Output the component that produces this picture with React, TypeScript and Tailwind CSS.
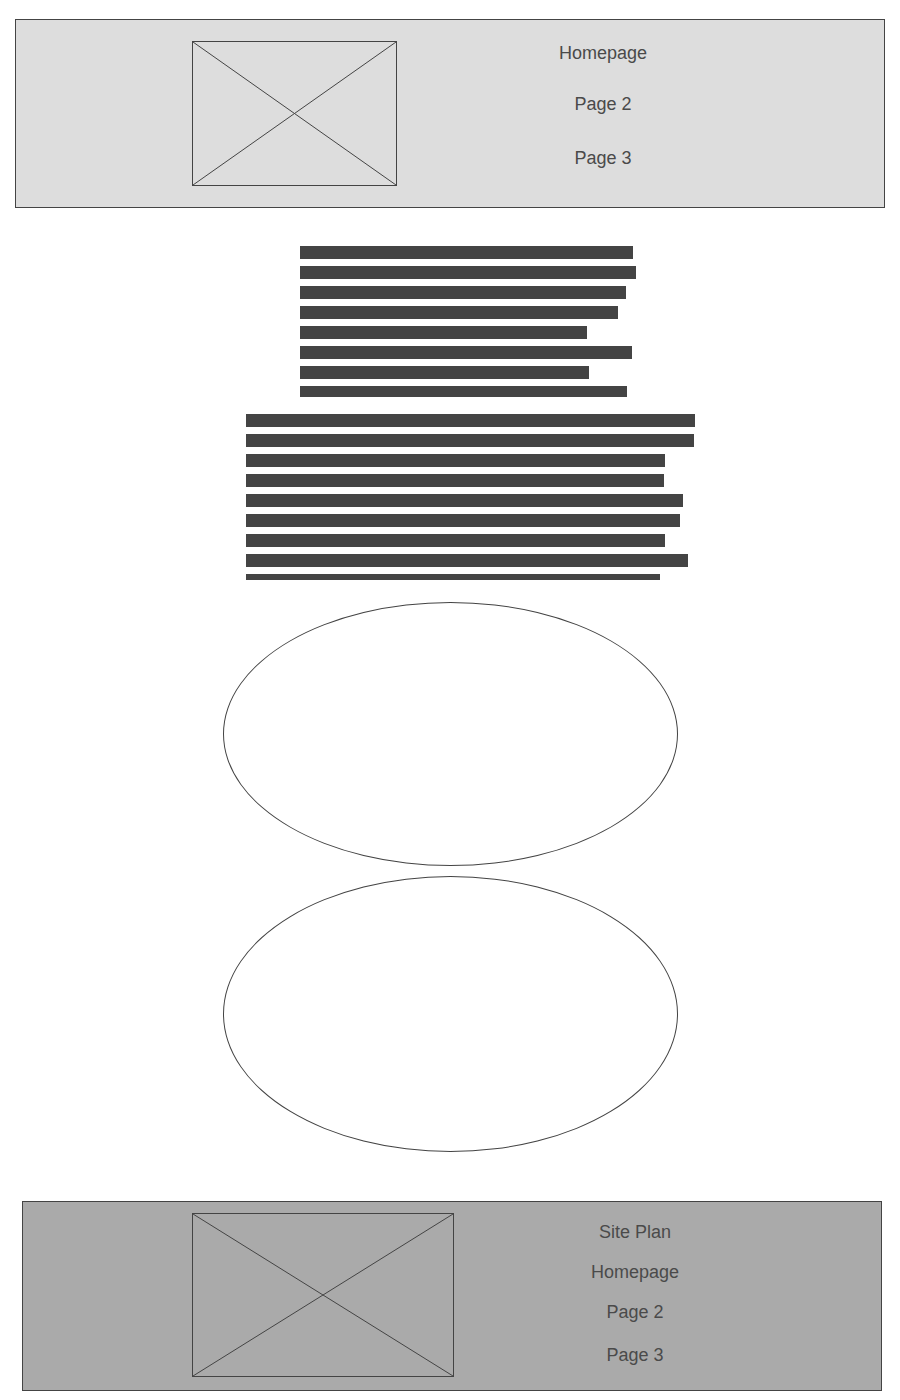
import React from "react"

const topBars = [333, 336, 326, 318, 287, 332, 289, 327]
const bottomBars = [449, 448, 419, 418, 437, 434, 419, 442, 414]

function Placeholder({ className }: { className: string }) {
  return (
    <div className={`border border-[#444] ${className}`}>
      <svg className="h-full w-full" viewBox="0 0 100 100" preserveAspectRatio="none">
        <line x1="0" y1="0" x2="100" y2="100" stroke="#444" strokeWidth="1" vectorEffect="non-scaling-stroke" />
        <line x1="100" y1="0" x2="0" y2="100" stroke="#444" strokeWidth="1" vectorEffect="non-scaling-stroke" />
      </svg>
    </div>
  )
}

function Bars({ widths, className }: { widths: number[]; className: string }) {
  return (
    <div className={`flex flex-col gap-[7px] overflow-hidden ${className}`}>
      {widths.map((w, i) => (
        <div key={i} className="h-[13px] shrink-0 bg-[#444]" style={{ width: w }} />
      ))}
    </div>
  )
}

export default function App() {
  return (
    <div className="min-h-[1400px] bg-white pt-[19px] font-['Liberation_Sans',Arial,sans-serif] text-[18px] leading-[24px] text-[#4a4a4a]">
      {/* Header */}
      <header className="mx-[15px] flex h-[189px] border border-[#444] bg-[#dddddd] pl-[176px]">
        <Placeholder className="mt-[21px] h-[145px] w-[205px]" />
        <nav className="ml-[106px] flex w-[200px] flex-col pt-[21px] text-center">
          <a>Homepage</a>
          <a className="mt-[27px]">Page 2</a>
          <a className="mt-[30px]">Page 3</a>
        </nav>
      </header>

      {/* Content */}
      <main className="flex flex-col">
        <Bars widths={topBars} className="ml-[300px] mt-[38px] h-[151px]" />
        <Bars widths={bottomBars} className="ml-[246px] mt-[17px] h-[166px]" />
        <div className="mx-auto mt-[22px] h-[264px] w-[455px] rounded-[50%] border border-[#444]" />
        <div className="mx-auto mt-[10px] h-[276px] w-[455px] rounded-[50%] border border-[#444]" />
      </main>

      {/* Footer */}
      <footer className="ml-[22px] mt-[49px] flex h-[190px] w-[860px] border border-[#444] bg-[#aaaaaa] pl-[169px]">
        <Placeholder className="mt-[11px] h-[164px] w-[262px]" />
        <nav className="ml-[81px] flex w-[200px] flex-col pt-[18px] text-center">
          <a>Site Plan</a>
          <a className="mt-[16px]">Homepage</a>
          <a className="mt-[16px]">Page 2</a>
          <a className="mt-[19px]">Page 3</a>
        </nav>
      </footer>
    </div>
  )
}
